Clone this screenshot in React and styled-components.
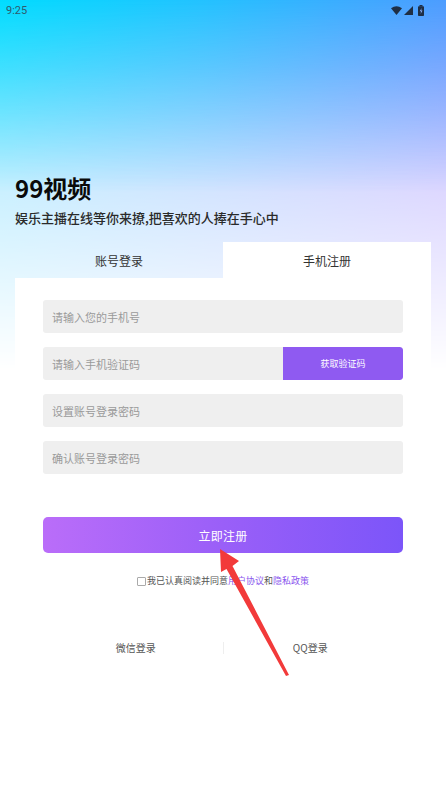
import React from "react";
import styled, { createGlobalStyle } from "styled-components";

const GlobalStyle = createGlobalStyle`
  html, body { margin: 0; padding: 0; background: #fff; }
  body { font-family: "Noto Sans CJK SC", "Noto Sans", sans-serif; }
  * { box-sizing: border-box; }
`;

const Page = styled.div`
  position: relative;
  width: 446px;
  min-height: 793px;
  overflow: hidden;
  background: #fff;
  &::before, &::after {
    content: "";
    position: absolute;
    left: 0;
    right: 0;
    top: 0;
    height: 370px;
    z-index: 0;
  }
  &::before {
    background: linear-gradient(to right, #a6e6ff 0%, #c6bcff 100%);
    -webkit-mask-image: linear-gradient(to bottom, #000 18%, transparent 100%);
    mask-image: linear-gradient(to bottom, #000 18%, transparent 100%);
  }
  &::after {
    background: linear-gradient(to right, #00dcff 0%, #22c2ff 45%, #4c9cff 100%);
    -webkit-mask-image: linear-gradient(to bottom, #000 0%, rgba(0,0,0,0.55) 22%, transparent 52%);
    mask-image: linear-gradient(to bottom, #000 0%, rgba(0,0,0,0.55) 22%, transparent 52%);
  }
`;

const Content = styled.div`
  position: relative;
  z-index: 1;
  display: flex;
  flex-direction: column;
`;

const StatusBar = styled.div`
  height: 20px;
  padding: 0 20px 0 6px;
  display: flex;
  align-items: center;
  justify-content: space-between;
`;

const Time = styled.span`
  font-family: Roboto, "Noto Sans", sans-serif;
  font-size: 11px;
  color: #2f5b6e;
  line-height: 1;
  margin-top: 0px;
`;

const StatusIcons = styled.div`
  display: flex;
  align-items: center;
  gap: 2px;
`;

const Header = styled.div`
  padding: 0 15px;
  margin-top: 156px;
  display: flex;
  flex-direction: column;
`;

const Title = styled.h1`
  margin: 0;
  font-size: 24px;
  line-height: 24px;
  font-weight: 700;
  color: #0a0a0a;
`;

const Subtitle = styled.p`
  margin: 11px 0 0;
  font-size: 13px;
  line-height: 13px;
  font-weight: 500;
  color: #2a2a2a;
`;

const Tabs = styled.div`
  margin: 18px 15px 0;
  display: grid;
  grid-template-columns: 1fr 1fr;
  height: 36px;
`;

const Tab = styled.div`
  display: flex;
  align-items: center;
  justify-content: center;
  font-size: 12px;
  color: #333;
  background: ${(p) => (p.$active ? "#fff" : "transparent")};
`;

const Card = styled.div`
  margin: 0 15px;
  background: #fff;
  padding: 22px 28px 120px;
  display: flex;
  flex-direction: column;
`;

const Fields = styled.div`
  display: flex;
  flex-direction: column;
  gap: 14px;
`;

const FieldRow = styled.div`
  display: flex;
  height: 33px;
  background: #efefef;
  border-radius: 3px;
  overflow: hidden;
`;

const Input = styled.input`
  flex: 1;
  min-width: 0;
  border: 0;
  outline: none;
  background: transparent;
  padding: 0 9px;
  font-family: "Noto Sans CJK SC", sans-serif;
  font-size: 11px;
  color: #333;
  &::placeholder { color: #9a9a9a; }
`;

const CodeButton = styled.button`
  width: 120px;
  border: 0;
  background: #8f5af1;
  color: #fff;
  font-family: "Noto Sans CJK SC", sans-serif;
  font-size: 9px;
  padding: 0;
  border-radius: 0 3px 3px 0;
`;

const SubmitButton = styled.button`
  margin-top: 43px;
  height: 36px;
  border: 0;
  border-radius: 5px;
  background: linear-gradient(to right, #ba6df9 0%, #9a5ff8 50%, #7c55f9 100%);
  color: #fff;
  font-family: "Noto Sans CJK SC", sans-serif;
  font-size: 12px;
  letter-spacing: 0.3px;
`;

const Agreement = styled.label`
  margin-top: 23px;
  display: flex;
  align-items: center;
  justify-content: center;
  font-size: 9px;
  line-height: 10px;
  color: #555;
`;

const Check = styled.span`
  width: 9px;
  height: 9px;
  border: 1px solid #aaa;
  border-radius: 1px;
  margin-right: 1px;
  background: #fff;
`;

const Link = styled.span`
  color: #8a56ee;
`;

const SocialRow = styled.div`
  margin: 56px 6px 0;
  display: grid;
  grid-template-columns: 1fr 1px 1fr;
  align-items: center;
`;

const Social = styled.div`
  text-align: center;
  font-size: 10px;
  color: #555;
  line-height: 12px;
`;

const Divider = styled.div`
  width: 1px;
  height: 12px;
  background: #eeeeee;
`;

const ArrowLayer = styled.svg`
  position: absolute;
  top: 0;
  left: 0;
  z-index: 2;
  pointer-events: none;
`;

export default function App() {
  return (
    <>
      <GlobalStyle />
      <Page>
        <Content>
          <StatusBar>
            <Time>9:25</Time>
            <StatusIcons>
              <svg width="11" height="9" viewBox="0 0 11 9">
                <path d="M0 2.2 Q5.5 -1.8 11 2.2 L5.5 9 Z" fill="#1f2f45" />
              </svg>
              <svg width="9" height="9" viewBox="0 0 9 9">
                <path d="M9 0 L9 9 L0 9 Z" fill="#1f2f45" />
              </svg>
              <svg width="9" height="11" viewBox="0 0 9 11" style={{ marginLeft: 2 }}>
                <rect x="2.5" y="0" width="3" height="1.5" fill="#1f2f45" />
                <rect x="1" y="1.3" width="6" height="9.7" rx="0.8" fill="#1f2f45" />
                <path d="M4.6 3 L2.8 6.3 L4.1 6.3 L3.6 9 L5.5 5.6 L4.2 5.6 Z" fill="#8fb4ff" />
              </svg>
            </StatusIcons>
          </StatusBar>

          <Header>
            <Title>99视频</Title>
            <Subtitle>娱乐主播在线等你来撩,把喜欢的人捧在手心中</Subtitle>
          </Header>

          <Tabs>
            <Tab>账号登录</Tab>
            <Tab $active>手机注册</Tab>
          </Tabs>

          <Card>
            <Fields>
              <FieldRow>
                <Input placeholder="请输入您的手机号" />
              </FieldRow>
              <FieldRow>
                <Input placeholder="请输入手机验证码" />
                <CodeButton>获取验证码</CodeButton>
              </FieldRow>
              <FieldRow>
                <Input type="password" placeholder="设置账号登录密码" />
              </FieldRow>
              <FieldRow>
                <Input type="password" placeholder="确认账号登录密码" />
              </FieldRow>
            </Fields>

            <SubmitButton>立即注册</SubmitButton>

            <Agreement>
              <Check />
              我已认真阅读并同意<Link>用户协议</Link>和<Link>隐私政策</Link>
            </Agreement>

            <SocialRow>
              <Social>微信登录</Social>
              <Divider />
              <Social>QQ登录</Social>
            </SocialRow>
          </Card>
        </Content>

        <ArrowLayer width="446" height="793" viewBox="0 0 446 793">
          <polygon
            points="220,549 239,561 232.5,566 289,675 286,676 226.5,569 221,572"
            fill="#f23a3a"
          />
        </ArrowLayer>
      </Page>
    </>
  );
}
